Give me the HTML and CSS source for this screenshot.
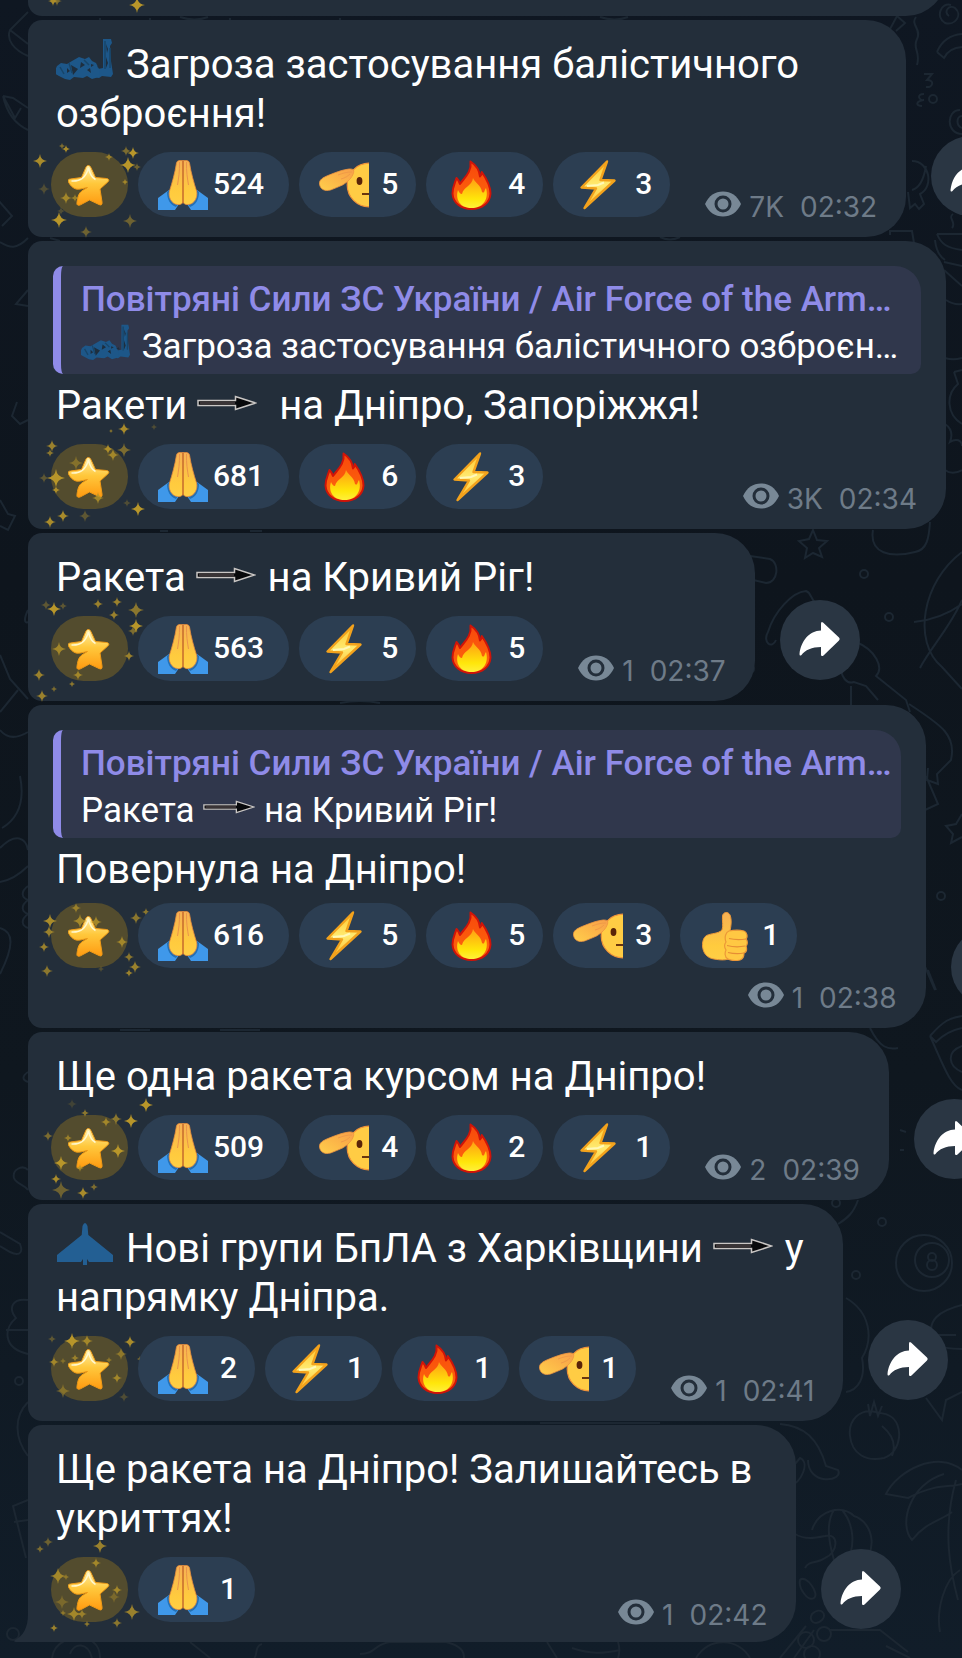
FILE: index.html
```html
<!DOCTYPE html>
<html lang="uk">
<head>
<meta charset="utf-8">
<meta name="viewport" content="width=device-width, initial-scale=1">
<title>Повітряні Сили ЗС України</title>
<link rel="stylesheet" href="styles.css">
</head>
<body>
<svg class="defs" aria-hidden="true" width="0" height="0">
  <defs>
    <linearGradient id="g-skin" x1="0" y1="0" x2="0" y2="1"><stop offset="0" stop-color="#f6b054"/><stop offset=".7" stop-color="#ffcb3e"/><stop offset="1" stop-color="#ffcf45"/></linearGradient>
    <linearGradient id="g-flame" x1="0" y1="0" x2="0" y2="1"><stop offset="0" stop-color="#f8480c"/><stop offset="1" stop-color="#fd6a0c"/></linearGradient>
    <linearGradient id="g-core" x1="0" y1="0" x2="0" y2="1"><stop offset="0" stop-color="#ff9d14"/><stop offset=".7" stop-color="#ffe60a"/><stop offset="1" stop-color="#fff03a"/></linearGradient>
    <linearGradient id="g-bolt" x1="0" y1="0" x2="0" y2="1"><stop offset="0" stop-color="#ffc62e"/><stop offset=".5" stop-color="#ffea70"/><stop offset="1" stop-color="#ffbc2a"/></linearGradient>
    <linearGradient id="g-star" x1="0" y1="0" x2="0" y2="1"><stop offset="0" stop-color="#fff0a8"/><stop offset=".45" stop-color="#ffc83c"/><stop offset="1" stop-color="#ff9a10"/></linearGradient>
    <linearGradient id="g-arm" x1="0" y1="1" x2="1" y2="0"><stop offset="0" stop-color="#ffcf4c"/><stop offset=".5" stop-color="#fcb648"/><stop offset="1" stop-color="#f7a04a"/></linearGradient>
  </defs>
  <symbol id="pray" viewBox="0 0 50 50">
    <path d="M0 38 11 30 21 44 17 50H0zM50 38 39 30 29 44 33 50H50z" fill="#3f98ea"/>
    <path d="M11 30c0 8 5 12 9 14l-2 3C12 45 9 39 9 32zM39 30c0 8-5 12-9 14l2 3c6-2 9-8 9-15z" fill="#2470b4"/>
    <path d="M18.500 3Q19 .4 22 .4h6Q31 .4 31.500 3C33 13 36 23 38.500 31c1.500 6-2 13-8 13.500-2.500.5-4-.5-5.500-2-1.500 1.500-3 2.500-5.500 2-6-.5-9.500-7.500-8-13.500C14 23 17 13 18.500 3z" fill="url(#g-skin)" stroke="#e78c3c" stroke-width=".8"/>
    <path d="M25 1v42" stroke="#c66a2c" stroke-width="1.500"/>
    <path d="M21.500 2c.3 9-1 17-2 23M28.500 2c-.3 9 1 17 2 23" fill="none" stroke="#ea944a" stroke-width="1"/>
  </symbol>
  <symbol id="fire" viewBox="0 0 50 50">
    <path d="M24.500 1.500c6 4 9 9 9.500 15 1.500-1 1.800-3 1.800-4.500C40 18 44.500 26 44.500 33.500 44 43 36 49 25.500 49S7 43 6.500 33.500C6.500 27 9 23 10.500 18c1.500 1.500 3 3.500 3.500 6C18 18 26 12 24.500 1.500z" fill="url(#g-flame)" stroke="#d01408" stroke-width="2" stroke-linejoin="round"/>
    <path d="M27 18c2 5 8 7 9 14 3 2 2-2 4-4 3 10-2 20-14.500 20C14 48 9 39 12 30c1 2 2 4 4 4 1-7 10-8 11-16z" fill="url(#g-core)"/>
  </symbol>
  <symbol id="bolt" viewBox="0 0 50 50">
    <path d="M34 1.500 8.500 27.500 23 28.500 11.500 48 41.500 20.500 27.500 20z" fill="url(#g-bolt)" stroke="#f3a21c" stroke-width="2.400" stroke-linejoin="round"/>
    <path d="M14 26 25 25 31 22.500" fill="none" stroke="#fff8b8" stroke-width="2"/>
  </symbol>
  <symbol id="salute" viewBox="0 0 50 50">
    <path d="M50 3.200A21.800 21.800 0 0 0 50 46.800z" fill="#ffcc44"/>
    <path d="M50 3.200A21.800 21.800 0 0 0 50 46.800" fill="none" stroke="#f0923a" stroke-width="1.200"/>
    <path d="M.5 24C-.2 20 4 17.500 9 15.500 15 13 24 9.500 30 9c4-.3 5.500 1 4.500 4-1.500 5-6 9-11 12-4 1.800-8 3.500-12 5C6 31.500 1.200 29.500.5 24z" fill="url(#g-arm)" stroke="#ef9440" stroke-width=".8"/>
    <path d="M19 15c5-2 9-3 14-3M22 19c4-1 7-3 9-5" fill="none" stroke="#f09a48" stroke-width="1"/>
    <ellipse cx="40.500" cy="21" rx="2.900" ry="3.900" fill="#5a2408"/>
    <path d="M43 34h7" stroke="#5a2408" stroke-width="1.800"/>
  </symbol>
  <symbol id="thumb" viewBox="0 0 50 50">
    <path d="M22 19c1.500-4 0-9 .5-14C23 1 28 0 30 4c2 5 1 11 0 16l-2 4 3 22c-2 4-12 3-17 2C7 47 3 42 2.500 35c0-4 .5-8 4-10.500C12 22 18 23 22 19z" fill="url(#g-skin)" stroke="#ec9838" stroke-width="1"/>
    <path d="M29 20c5-1 11-1 15 0 3 1 4 6 2 8 2 2 1.500 6 0 7 1 3 .5 6-2 7 0 4-1 6-4 7-5 1-9 .5-12-1-4-2-3-7-2-9-2-3-1.500-6 0-8-2-5 0-10 3-11z" fill="#ffc843" stroke="#ec9838" stroke-width="1.200"/>
    <path d="M29 27.500c6 1.500 11 1.500 17 .5M27 34.500c6 1.500 13 1.500 18 .5M28 41.500c6 1.500 11 1.500 16 .5" fill="none" stroke="#e68e34" stroke-width="1.200"/>
  </symbol>
  <symbol id="star" viewBox="0 0 42 42">
    <path d="M20.300 1.500c1.200 0 2 .8 2.700 2.300l4.500 9.700 11 1c2.500.3 3 2 1.300 3.500L32 25l2 13c.4 2.800-.9 3.600-3 2.500L21.500 36l-9 4.800c-2.600 1.200-4 .2-3.500-2.500.7-4 1-7 3-9.500 1.600-2 4-3.300 7.500-5.300-4.500.8-8 2.300-11.500 1.500C5 24.200 2.500 21.500 1 19c-1.500-2.500-1-3.800 1.500-4l11-1.500 4.200-9.700c.7-1.500 1.400-2.300 2.600-2.300z" fill="url(#g-star)" stroke="#f09a16" stroke-width="1"/>
    <path d="M3.500 17c8 .5 14-2 17-13 1.500 7 4 10 7 11.500" fill="none" stroke="#fff8cf" stroke-width="1.500"/>
  </symbol>
  <symbol id="eye" viewBox="0 0 36 26">
    <path d="M0 13C4 4.500 10 .5 18 .5S32 4.500 36 13c-4 8.500-10 12.500-18 12.500S4 21.500 0 13z" fill="#788896"/>
    <circle cx="18" cy="13" r="7" fill="none" stroke="#232e3a" stroke-width="3"/>
  </symbol>
  <symbol id="share" viewBox="0 0 80 80">
    <path d="M41 24q0-3 2-1.500L59 37.500q1.500 1.500 0 3L43.500 55.500Q41 57 41 54.500V47C32 47 25 50 21.500 55q-2 1.500-2-1C21 41 29 31 41 30.500z" fill="#fff"/>
  </symbol>
  <symbol id="arrow" viewBox="0 0 60 16">
    <path d="M1 5.500H38.500V1.500L58.500 8 38.500 14.500V10.500H1z" fill="#08090b" stroke="#c9c6c4" stroke-width="1.500"/>
    <path d="M3 8H38" stroke="#3a3436" stroke-width="3"/>
  </symbol>
  <symbol id="launcher" viewBox="0 0 58 42">
    <path d="M47 1h8l1 4-2 3 1 15 2 13-2 3-9-1-3 2-5-1-2-7 3-3 3 2 5-1V10z" fill="#1d5789"/>
    <path d="M1 28l4-3 6 1 5-3 7-4 6 2 4-2 3 4 4 2 4 8-1 6-7 2-5-3-4 2-9-1-4 3-5-1-6-3-5-3z" fill="#1d5789"/>
    <path d="M11 30l3 3-3 2zM15 27l7 4-5 6zM25 24l4 3-5 3zM31 32l3-2 1 5zM41 29l3-2 1 3zM50 6l2 5-1 4zM50 19l2 6-2 5zM22 21l4 3M37 37l3-1M35 26l3 1-3 2z" fill="#1e2e3e"/>
    <path d="M4 29l4 7M13 25l3 10M28 22l5 5M49 3v28M54 10v20" fill="none" stroke="#174569" stroke-width="1.500"/>
  </symbol>
  <symbol id="plane" viewBox="0 0 58 44">
    <path d="M26.500 4q2.500-6 5 0l.8 9L57 33v7H33l-2-3v6h-4v-6l-2 3H1v-7L25.700 13z" fill="#235f93"/>
  </symbol>
  <symbol id="sparkle" viewBox="-1 -1 2 2" overflow="visible">
    <path d="M0-1Q.1-.1 1 0 .1.100 0 1-.1.100-1 0-.1-.1 0-1z"/>
  </symbol>
</svg>

<svg class="wallpaper" aria-hidden="true" viewBox="0 0 962 1658" preserveAspectRatio="xMidYMin slice">
  <path d="M951 5c-10-3-16 12-6 18 10 3 18-8 10-15-6-4-12 4-6 8M889 31l8-15 8 7-9 8M916 17c-6 8 6 12 1 22s4 12 0 26M937 52c6-14 16-18 28-18M937 52l7 6c4-8 10-11 20-11M924 74h8l-5 6c8 0 6 8-1 7M924 94c-8 0-5 7 0 6-8 1-9 6-2 6M960 110c-14 0-14 24 2 24m0-18c-6 0-6 10 0 12M912 161c18 0 22 26 8 33l4 10-5 5-4-5-5 4-2-16M912 190c8-2 12-12 14-24M953 214c-6 4 4 8-1 14M937 234h25M937 234c4 10 10 14 25 16M890 235v-4h22l2 12"/>
  <circle cx="933" cy="99" r="4"/>
  <path d="M935 240c1 10 4 16 10 20M944 262l18 4M944 270l18 16M946 300c6 4 10 5 16 4M945 358c6 2 10 2 17 0M954 372l8-2M954 372l4 12c-12 10-12 30 4 40M945 424c6 4 8 10 5 18 6-4 12-2 12 4M945 470c5 4 10 4 17 0"/>
  <path d="M813 530l4 10 10 1-8 7 3 9-9-4-8 5 2-10-8-7 10-2zM873 530c-4 24 18 28 42 22 12-2 14-14 15-30M750 556l20 3c10 4 8 24-4 24l-17-4M962 552c-40 30-50 90-20 115l20 22M914 622c20-2 34-8 48-18M920 668c10-20 30-40 42-68M768 632c6-20 24-40 38-41 6 2 4 8 10 12M768 632c-6 10 4 18 8 8M856 642c20 8 28 26 20 34l30 24 4 12M840 660c0 20 8 24 14 22l12 4 12 14M851 686v22"/>
  <circle cx="864" cy="574" r="4"/><circle cx="889" cy="617" r="4"/><circle cx="750" cy="669" r="4"/>
  <path d="M909 704c30 20 48 30 42 56l-14 14 1 10-11-4 1-12M926 776l12 28-13 6M962 814l-6 10-10 2 7 8-2 9 11-6M923 962l12 28M928 970l8 20M930 1036c14-16 20-18 32-20M930 1036c12 26 20 50 32 54M930 1036l6 6c8-8 16-12 26-14M962 1046c-16 6-14 20 0 26M870 1028c10 20 18 22 28 20M900 1130l6 2M900 1150h4"/>
  <circle cx="941" cy="896" r="4"/><circle cx="918" cy="774" r="3"/>
  <circle cx="924" cy="1263" r="28"/><circle cx="932" cy="1260" r="17"/><circle cx="932" cy="1257" r="4"/><circle cx="932" cy="1265" r="5"/><circle cx="836" cy="1203" r="4"/><circle cx="882" cy="1222" r="4"/><circle cx="856" cy="1275" r="4"/>
  <path d="M858 1200c-4 12-10 18-20 24M846 1298c24 14 28 40 16 60 4 20-4 32-16 34M962 1305c-24 6-34 16-30 30M926 1398l16 22 4-20 16-8M956 1335h-20c-8 6 0 14 26 14M876 1412c-16-4-28 8-26 24 2 18 16 26 34 22 18-6 20-34 6-42-6-4-10-2-14-4zM868 1404l2 12 4-14 4 14 4-10M882 1426c12 10 14 20 10 30M780 1424c24 2 38 14 46 42l12 4c6 12-30 16-30-10M790 1470l10-12c10 4 2 24-10 28M962 1470c-24-20-64 0-76 24l22 4c30-16 44-10 54-14M944 1474c-34 10-46 50-32 66 14-18 30-20 40-28M956 1480c-14 50-6 90 2 120M960 1570c-16 10-24 40-20 62"/>
  <path d="M795 1534c10 6 20 4 30 2 14-4 14 16 0 22-8 6-16 2-20 10M812 1530c6-20 30-26 42-14 20 6 26 40 2 50l-12-4M834 1510c-8 12-6 30 0 50M842 1510c12 14 14 36 4 54M800 1580c6-6 20 14 14 18s-16-10-14-18zM812 1614c8-8 16 0 10 6s-14 2-10-6zM780 1658l26-32M794 1658l20-28M886 1646l24 12M830 1630l50 0 28 22M750 1658c-12-20-40-22-54 0M620 1650c-18 4-30 4-48-2M547 1642l10 16M618 1642c2 6 2 10 0 16"/>
  <circle cx="806" cy="1640" r="8"/><circle cx="812" cy="1654" r="8"/><circle cx="824" cy="1634" r="7"/>
  <path d="M28 12 10 30c-4 10 4 20 18 26M10 30l18 14M3 96l10 2 15 10M3 96c4 18 12 28 25 34M3 96l12 22 6-10M-2 200l14 16-10 10M0 242c10 6 16 8 28-4M28 290l-12 14 12 2M17 402l-5 14 8 8 8-4M0 500l8 14 7 2-7 14-8-4M28 610c-4 8-4 14 0 12M0 655l10 24 18 20M0 712l18-22M0 730c8 10 18 8 28 2M20 776c4 20 2 40-18 52M0 848c16-16 26-10 28 2M0 882c12-2 20-8 28-16M28 886c-8 6-6 12 0 14-8 6-6 12 0 14-8 6-6 12 0 14M0 928c14 4 14 18 0 46M28 1072c-6 4-6 8 0 10M28 1170c-6-6-16 0-14 8 2 6 10 6 14 12M0 1232l20 12c4 10-2 12-10 8l-10-6M28 1300c-16-2-20 8-12 18-12 10-14 30 12 36M6 1330h22M28 1402c-14 14-14 36 0 54M28 1500l-15 6 13 52M14 1522l14-2M52 1658c2-16 18-22 34-20 10 4 14 10 14 20M70 1654c4-12 18-12 22 4M190 1642l20 16M262 1644c-8 2-4 12-8 14M360 1654c16 0 14-10 30-12h56c16 4 18 10 18 16"/>
  <circle cx="19" cy="1381" r="4"/><circle cx="13" cy="1634" r="6"/>
  <path d="M100 18v3M150 18v3M230 18v3M340 18v3M180 17q15 5 28 0M600 17q15 5 28 0M660 237q10 5 20 0M50 238l10 3M160 531h8M250 531h12M340 703q20-4 40 0M120 1030h30M220 1030h40M540 1423h120"/>
</svg>

<main class="chat">
  <div class="row">
    <div class="bubble bubble--cut bubble--full"><svg class="sparkles" data-sparkles="2,-15,5,.9;6,-15,5,.6;86,-11,8,1" aria-hidden="true"></svg></div>
  </div>

  <article class="row">
    <div class="bubble">
      <p class="text"><svg class="inline-icon inline-icon--launcher" role="img" aria-label="Пускова установка"><use href="#launcher"/></svg> Загроза застосування балістичного<br>озброєння!</p>
      <footer class="footer">
        <div class="reactions">
          <button class="reaction reaction--star" aria-label="Зірка"><svg class="star"><use href="#star"/></svg><svg class="sparkles" data-sparkles="-11,9,7,.9;15,-3,4,.9;11,-6,3,.6;75,-1,5,.6;82,1,6,1;58,5,4,.7;77,13,8,1;86,15,4,.5;74,30,3,.8;-7,37,6,.3;15,46,6,.8;24,46,4,.7;10,59,4,.3;8,68,8,1;79,69,7,.5;35,80,6,.5"></svg></button>
          <button class="reaction reaction--many"><svg class="emoji"><use href="#pray"/></svg><span>524</span></button>
          <button class="reaction"><svg class="emoji"><use href="#salute"/></svg><span>5</span></button>
          <button class="reaction"><svg class="emoji"><use href="#fire"/></svg><span>4</span></button>
          <button class="reaction"><svg class="emoji"><use href="#bolt"/></svg><span>3</span></button>
        </div>
        <div class="meta"><svg class="eye"><use href="#eye"/></svg><span>7K</span><time>02:32</time></div>
      </footer>
    </div>
    <button class="share" aria-label="Переслати"><svg><use href="#share"/></svg></button>
  </article>

  <article class="row">
    <div class="bubble bubble--full">
      <blockquote class="quote">
        <strong class="quote__title">Повітряні Сили ЗС України / Air Force of the Arm…</strong>
        <span class="quote__text"><svg class="inline-icon inline-icon--launcher" role="img" aria-label="Пускова установка"><use href="#launcher"/></svg> Загроза застосування балістичного озброєн…</span>
      </blockquote>
      <p class="text text--reply">Ракети <svg class="inline-icon inline-icon--arrow" role="img" aria-label="Курсом"><use href="#arrow"/></svg>&nbsp; на Дніпро, Запоріжжя!</p>
      <footer class="footer">
        <div class="reactions">
          <button class="reaction reaction--star" aria-label="Зірка"><svg class="star"><use href="#star"/></svg><svg class="sparkles" data-sparkles="73,-15,6,.9;60,-13,2,.8;1,2,6,.8;-1,9,4,.7;57,5,5,.9;62,11,6,.8;73,6,7,.6;25,19,7,.5;-7,34,5,.4;5,34,9,1;5,46,4,.9;47,54,6,.8;76,59,4,.3;87,65,7,1;12,72,6,.9;34,72,6,.4;-1,78,6,.9;103,-17,3,.3"></svg></button>
          <button class="reaction reaction--many"><svg class="emoji"><use href="#pray"/></svg><span>681</span></button>
          <button class="reaction"><svg class="emoji"><use href="#fire"/></svg><span>6</span></button>
          <button class="reaction"><svg class="emoji"><use href="#bolt"/></svg><span>3</span></button>
        </div>
        <div class="meta"><svg class="eye"><use href="#eye"/></svg><span>3K</span><time>02:34</time></div>
      </footer>
    </div>
  </article>

  <article class="row">
    <div class="bubble">
      <p class="text">Ракета <svg class="inline-icon inline-icon--arrow" role="img" aria-label="Курсом"><use href="#arrow"/></svg> на Кривий Ріг!</p>
      <footer class="footer">
        <div class="reactions">
          <button class="reaction reaction--star" aria-label="Зірка"><svg class="star"><use href="#star"/></svg><svg class="sparkles" data-sparkles="-5,-11,5,.4;3,-7,7,1;12,-10,4,.4;47,-12,5,.8;66,-14,5,.8;63,-1,5,.8;85,-6,8,.7;85,10,7,1;82,15,5,.6;8,33,7,.8;78,40,5,.8;27,59,5,.8;-12,59,6,.8;3,73,3,.6;21,68,3,.7;-9,80,6,.8"></svg></button>
          <button class="reaction reaction--many"><svg class="emoji"><use href="#pray"/></svg><span>563</span></button>
          <button class="reaction"><svg class="emoji"><use href="#bolt"/></svg><span>5</span></button>
          <button class="reaction"><svg class="emoji"><use href="#fire"/></svg><span>5</span></button>
        </div>
        <div class="meta"><svg class="eye"><use href="#eye"/></svg><span>1</span><time>02:37</time></div>
      </footer>
    </div>
    <button class="share" aria-label="Переслати"><svg><use href="#share"/></svg></button>
  </article>

  <article class="row">
    <div class="bubble">
      <blockquote class="quote">
        <strong class="quote__title">Повітряні Сили ЗС України / Air Force of the Arm…</strong>
        <span class="quote__text">Ракета <svg class="inline-icon inline-icon--arrow" role="img" aria-label="Курсом"><use href="#arrow"/></svg> на Кривий Ріг!</span>
      </blockquote>
      <p class="text text--reply">Повернула на Дніпро!</p>
      <footer class="footer footer--stacked">
        <div class="reactions">
          <button class="reaction reaction--star" aria-label="Зірка"><svg class="star"><use href="#star"/></svg><svg class="sparkles" data-sparkles="25,5,5,.7;-1,18,7,.9;-2,29,6,.8;-7,44,5,.8;29,18,7,.8;45,19,6,.8;85,15,6,.7;95,9,4,.7;71,39,6,.8;78,54,5,.7;84,64,6,.8;78,70,4,.8;-4,68,6,.7;50,66,3,.3"></svg></button>
          <button class="reaction reaction--many"><svg class="emoji"><use href="#pray"/></svg><span>616</span></button>
          <button class="reaction"><svg class="emoji"><use href="#bolt"/></svg><span>5</span></button>
          <button class="reaction"><svg class="emoji"><use href="#fire"/></svg><span>5</span></button>
          <button class="reaction"><svg class="emoji"><use href="#salute"/></svg><span>3</span></button>
          <button class="reaction"><svg class="emoji"><use href="#thumb"/></svg><span>1</span></button>
        </div>
        <div class="meta"><svg class="eye"><use href="#eye"/></svg><span>1</span><time>02:38</time></div>
      </footer>
    </div>
    <button class="share" aria-label="Переслати"><svg><use href="#share"/></svg></button>
  </article>

  <article class="row">
    <div class="bubble">
      <p class="text">Ще одна ракета курсом на Дніпро!</p>
      <footer class="footer">
        <div class="reactions">
          <button class="reaction reaction--star" aria-label="Зірка"><svg class="star"><use href="#star"/></svg><svg class="sparkles" data-sparkles="21,-11,5,.2;95,-10,7,1;34,-2,4,.7;55,7,5,.8;65,4,6,.7;80,6,7,1;-3,21,5,.6;17,23,4,.7;67,36,7,1;10,48,7,1;29,53,4,.7;5,64,5,.9;10,75,9,.5;32,78,6,.9;43,72,4,.6"></svg></button>
          <button class="reaction reaction--many"><svg class="emoji"><use href="#pray"/></svg><span>509</span></button>
          <button class="reaction"><svg class="emoji"><use href="#salute"/></svg><span>4</span></button>
          <button class="reaction"><svg class="emoji"><use href="#fire"/></svg><span>2</span></button>
          <button class="reaction"><svg class="emoji"><use href="#bolt"/></svg><span>1</span></button>
        </div>
        <div class="meta"><svg class="eye"><use href="#eye"/></svg><span>2</span><time>02:39</time></div>
      </footer>
    </div>
    <button class="share" aria-label="Переслати"><svg><use href="#share"/></svg></button>
  </article>

  <article class="row">
    <div class="bubble">
      <p class="text"><svg class="inline-icon inline-icon--plane" role="img" aria-label="БпЛА"><use href="#plane"/></svg> Нові групи БпЛА з Харківщини <svg class="inline-icon inline-icon--arrow" role="img" aria-label="Курсом"><use href="#arrow"/></svg> у<br>напрямку Дніпра.</p>
      <footer class="footer">
        <div class="reactions">
          <button class="reaction reaction--star" aria-label="Зірка"><svg class="star"><use href="#star"/></svg><svg class="sparkles" data-sparkles="1,3,4,.4;21,5,8,1;36,5,6,.8;79,6,6,.9;70,18,6,.6;24,22,4,.7;3,26,5,.8;12,25,3,.5;58,24,3,.6;89,23,3,.6;96,27,4,.3;66,42,5,.8;12,55,7,.5;73,61,5,.3"></svg></button>
          <button class="reaction"><svg class="emoji"><use href="#pray"/></svg><span>2</span></button>
          <button class="reaction"><svg class="emoji"><use href="#bolt"/></svg><span>1</span></button>
          <button class="reaction"><svg class="emoji"><use href="#fire"/></svg><span>1</span></button>
          <button class="reaction"><svg class="emoji"><use href="#salute"/></svg><span>1</span></button>
        </div>
        <div class="meta"><svg class="eye"><use href="#eye"/></svg><span>1</span><time>02:41</time></div>
      </footer>
    </div>
    <button class="share" aria-label="Переслати"><svg><use href="#share"/></svg></button>
  </article>

  <article class="row row--last">
    <div class="bubble">
      <svg class="tail" viewBox="0 0 14 28" aria-hidden="true"><path d="M14 0C14 14 9 22 1 26q-2 2 1 2H14z"/></svg>
      <p class="text">Ще ракета на Дніпро! Залишайтесь в<br>укриттях!</p>
      <footer class="footer">
        <div class="reactions">
          <button class="reaction reaction--star" aria-label="Зірка"><svg class="star"><use href="#star"/></svg><svg class="sparkles" data-sparkles="-11,-8,4,.6;-3,-15,5,.5;49,-11,7,.8;45,6,5,.8;7,19,8,.8;15,20,3,.6;66,33,5,.8;63,40,6,.4;11,45,7,.4;23,57,7,.8;31,57,5,.7;81,55,8,.8;36,67,3,.7;66,66,5,.7;3,71,4,.8;12,56,3,.6"></svg></button>
          <button class="reaction"><svg class="emoji"><use href="#pray"/></svg><span>1</span></button>
        </div>
        <div class="meta"><svg class="eye"><use href="#eye"/></svg><span>1</span><time>02:42</time></div>
      </footer>
    </div>
    <button class="share" aria-label="Переслати"><svg><use href="#share"/></svg></button>
  </article>
</main>
<script src="sparkles.js"></script>
</body>
</html>
```
FILE: styles.css
```css
* { box-sizing: border-box; }

body {
  margin: 0;
  min-height: 100vh;
  position: relative;
  overflow: hidden auto;
  background: linear-gradient(180deg, #0f1722 0%, #0e151d 35%, #0f171f 65%, #111d29 100%);
  color: #fff;
  font-family: Roboto, "Noto Sans", sans-serif;
}

.defs { position: absolute; }

.wallpaper {
  position: absolute;
  inset: 0;
  width: 100%;
  height: 100%;
  fill: none;
  stroke: #1c2732;
  stroke-width: 2;
}

.chat {
  position: relative;
  display: flex;
  flex-direction: column;
  gap: 4px;
  padding: 0 16px 16px 28px;
  overflow: clip;
}

.row {
  display: flex;
  align-items: flex-end;
  gap: 25px;
}

.bubble {
  position: relative;
  flex: none;
  max-width: 100%;
  padding: 20px 0;
  background: #232e3a;
  border-radius: 14px 40px 40px 14px;
}

.bubble--full { width: 100%; }

/* The previous message, scrolled up so that only its lower edge shows. */
.bubble--cut {
  height: 80px;
  margin-top: -64px;
}

.row--last .bubble { border-bottom-left-radius: 0; }

.tail {
  position: absolute;
  right: 100%;
  bottom: 0;
  width: 14px;
  height: 28px;
  fill: #232e3a;
}

.text {
  margin: 0 28px 14px;
  font-size: 40px;
  line-height: 49px;
}

.text--reply { margin-top: 7px; }

.row--last .text { margin-right: 44px; }

.inline-icon { vertical-align: baseline; }
.inline-icon--launcher { width: 58px; height: 42px; margin: -8px 2px -2px 0; }
.inline-icon--plane { width: 58px; height: 44px; margin: -8px 2px -4px 0; }
.inline-icon--arrow { width: 60px; height: 16px; margin: 0 2px 8px 0; }

.quote {
  margin: 5px 25px 0;
  padding: 10px 9px 4px 20px;
  border-left: 8px solid #8f8be8;
  border-radius: 10px 26px 10px 10px;
  background: #30374c;
  font-size: 35px;
  line-height: 47px;
  white-space: nowrap;
}

.quote__title,
.quote__text { display: block; }

.quote__title {
  color: #8f8be8;
  font-weight: 500;
}

.quote .inline-icon--launcher { width: 50px; height: 36px; }
.quote .inline-icon--arrow { width: 52px; height: 14px; margin-right: 0; }

.footer {
  display: flex;
  align-items: flex-end;
  justify-content: space-between;
  gap: 35px;
  padding: 0 29px 0 23px;
}

.footer--stacked {
  flex-direction: column;
  align-items: stretch;
  gap: 14px;
  margin-top: -5px;
}

.footer--stacked .meta { justify-content: flex-end; }

.reactions {
  display: flex;
  gap: 10px;
}

.reaction {
  position: relative;
  display: flex;
  align-items: center;
  gap: 12px;
  height: 65px;
  padding: 0 18px 0 20px;
  border: 0;
  border-radius: 33px;
  background: #2c3e52;
  color: #fff;
  font-family: inherit;
  font-size: 30px;
  font-weight: 500;
  line-height: 36px;
}

.reaction span { padding-bottom: 2px; }

.reaction--many { gap: 5px; padding-right: 25px; }

.reaction--star {
  justify-content: center;
  width: 77px;
  padding: 0 2px 0 0;
  background: #534c2e;
}

.emoji { width: 50px; height: 50px; }
.star { width: 42px; height: 42px; }

.sparkles {
  position: absolute;
  left: 0;
  top: 0;
  width: 77px;
  height: 65px;
  overflow: visible;
  fill: #b8962a;
  pointer-events: none;
}

.bubble--cut .sparkles { left: 23px; top: 80px; }

.meta {
  display: flex;
  align-items: center;
  gap: 8px;
  height: 26px;
  color: #6e7b88;
  font-family: Inter, "Open Sans", sans-serif;
  font-size: 28px;
  line-height: 26px;
}

.meta span,
.meta time { padding-top: 6px; }

.meta time { margin-left: 8px; }

.row--last .meta { margin-bottom: -3px; }

.eye { width: 36px; height: 26px; }

.share {
  flex: none;
  width: 80px;
  height: 80px;
  margin-bottom: 21px;
  padding: 0;
  border: 0;
  border-radius: 50%;
  background: #2a3643;
}

.row--last .share { margin-bottom: 13px; }

.share svg { display: block; width: 80px; height: 80px; }
```
FILE: sparkles.js
```js
// Each entry of data-sparkles is "x,y,radius,opacity", separated by semicolons.
const SVG = "http://www.w3.org/2000/svg";

document.querySelectorAll("[data-sparkles]").forEach((layer) => {
  layer.dataset.sparkles.split(";").forEach((entry) => {
    const [x, y, r, opacity] = entry.split(",").map(Number);
    const spark = document.createElementNS(SVG, "use");
    spark.setAttribute("href", "#sparkle");
    spark.setAttribute("x", x - r);
    spark.setAttribute("y", y - r);
    spark.setAttribute("width", r * 2);
    spark.setAttribute("height", r * 2);
    spark.setAttribute("opacity", opacity);
    layer.append(spark);
  });
});
```
